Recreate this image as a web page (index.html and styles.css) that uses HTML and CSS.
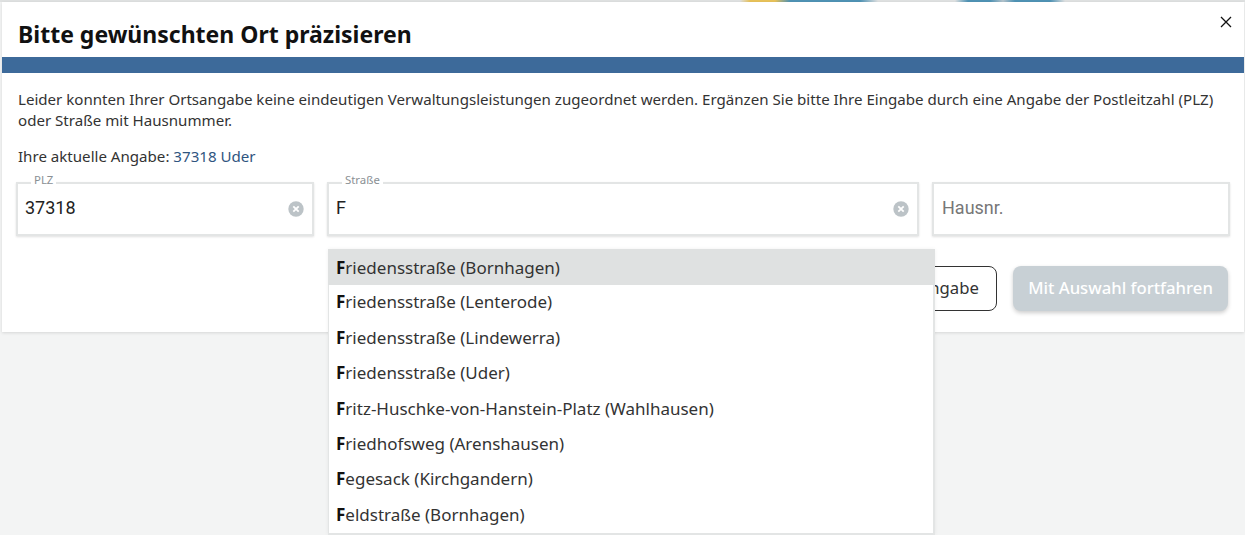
FILE: index.html
```html
<!DOCTYPE html>
<html lang="de">
<head>
<meta charset="utf-8">
<title>Bitte gewünschten Ort präzisieren</title>
<link rel="stylesheet" href="styles.css">
</head>
<body>
<div class="strip"></div>
<main class="modal">
  <button class="close" aria-label="Schließen">
    <svg width="12" height="12" viewBox="0 0 12 12"><path d="M1 1l10 10M11 1L1 11" stroke="#111" stroke-width="1.3" fill="none"/></svg>
  </button>
  <h1 class="title">Bitte gewünschten Ort präzisieren</h1>
  <div class="bar"></div>
  <div class="content">
    <p class="intro">Leider konnten Ihrer Ortsangabe keine eindeutigen Verwaltungsleistungen zugeordnet werden. Ergänzen Sie bitte Ihre Eingabe durch eine Angabe der Postleitzahl (PLZ) oder Straße mit Hausnummer.</p>
    <p class="current">Ihre aktuelle Angabe: <span class="place">37318 Uder</span></p>
    <div class="fields">
      <div class="field plz">
        <span class="legend">PLZ</span>
        <span class="value">37318</span>
        <svg class="clear" width="16" height="16" viewBox="0 0 16 16"><circle cx="8" cy="8" r="7.7" fill="#bcc3c7"/><path d="M5.3 5.3l5.4 5.4M10.7 5.3l-5.4 5.4" stroke="#fff" stroke-width="1.8" fill="none"/></svg>
      </div>
      <div class="field street">
        <span class="legend">Straße</span>
        <span class="value">F</span>
        <svg class="clear" width="16" height="16" viewBox="0 0 16 16"><circle cx="8" cy="8" r="7.7" fill="#bcc3c7"/><path d="M5.3 5.3l5.4 5.4M10.7 5.3l-5.4 5.4" stroke="#fff" stroke-width="1.8" fill="none"/></svg>
      </div>
      <div class="field number">
        <span class="value placeholder">Hausnr.</span>
      </div>
    </div>
    <div class="actions">
      <button class="btn secondary">Ohne Angabe</button>
      <button class="btn primary">Mit Auswahl fortfahren</button>
    </div>
  </div>
</main>
<ul class="list">
  <li class="item active"><b>F</b>riedensstraße (Bornhagen)</li>
  <li class="item"><b>F</b>riedensstraße (Lenterode)</li>
  <li class="item"><b>F</b>riedensstraße (Lindewerra)</li>
  <li class="item"><b>F</b>riedensstraße (Uder)</li>
  <li class="item"><b>F</b>ritz-Huschke-von-Hanstein-Platz (Wahlhausen)</li>
  <li class="item"><b>F</b>riedhofsweg (Arenshausen)</li>
  <li class="item"><b>F</b>egesack (Kirchgandern)</li>
  <li class="item"><b>F</b>eldstraße (Bornhagen)</li>
</ul>
</body>
</html>
```
FILE: styles.css
```css
* { box-sizing: border-box; }
html, body { margin: 0; height: 100%; overflow: hidden; }
body {
  background: #f3f4f4;
  font-family: "Noto Sans", sans-serif;
  color: #333;
  position: relative;
}
.strip {
  height: 2px;
  background: linear-gradient(90deg, #dfe1e1 0, #dfe1e1 740px, #e8c25a 750px, #e8c25a 775px, #4f93b5 790px, #4f93b5 860px, #dfe1e1 878px, #dfe1e1 955px, #4f93b5 968px, #4f93b5 990px, #b5c4cc 1003px, #4f93b5 1015px, #4f93b5 1050px, #dfe1e1 1065px);
}
.modal {
  position: relative;
  margin: 0 1px 0 2px;
  height: 330px;
  background: #fff;
  box-shadow: 0 1px 3px rgba(0,0,0,.12);
}
.close {
  position: absolute;
  top: 14px;
  right: 12px;
  width: 12px;
  height: 12px;
  padding: 0;
  border: 0;
  background: none;
  display: flex;
}
.title {
  margin: 0;
  padding: 14px 16px 0;
  height: 55px;
  font-size: 23px;
  line-height: 36px;
  font-weight: 700;
  color: #111;
}
.bar { height: 16px; background: #3d6a9a; }
.content { padding: 16px 14px 0 14px; }
.intro { margin: 0; font-size: 15.1px; line-height: 21px; padding-left: 2px; color: #333; }
.current { margin: 15px 0 0; font-size: 15.1px; line-height: 21px; padding-left: 2px; color: #333; }
.place { color: #2f5580; }
.fields { display: flex; gap: 13px; margin-top: 15px; }
.field {
  position: relative;
  height: 54px;
  border: 2px solid #e3e5e5;
  box-shadow: 0 1px 2px rgba(0,0,0,.12);
  background: #fff;
  display: flex;
  align-items: center;
  justify-content: space-between;
  padding: 0 8px 4px 7px;
  font-family: Roboto, sans-serif;
  font-size: 18px;
  color: #222;
}
.plz { width: 298px; }
.street { width: 592px; }
.number { width: 298px; padding-left: 8px; }
.legend {
  position: absolute;
  top: -11px;
  left: 13px;
  padding: 0 3px;
  background: linear-gradient(transparent 8px, #fff 8px);
  font-family: "Noto Sans", sans-serif;
  font-size: 11.4px;
  line-height: 14px;
  color: #8a9094;
}
.clear { margin-top: 4px; }
.placeholder { color: #777; font-size: 18px; }
.actions { display: flex; justify-content: flex-end; gap: 16px; margin-top: 30px; padding-right: 2px; }
.btn {
  height: 45px;
  border-radius: 8px;
  font-family: "Noto Sans", sans-serif;
  font-size: 16.7px;
  padding: 0 0 2px;
}
.secondary { width: 144px; background: #fff; border: 1px solid #333; color: #333; }
.primary { width: 215px; background: #c8d0d5; border: 0; color: #fff; font-weight: 500; box-shadow: 0 2px 4px rgba(0,0,0,.2); }
.list {
  position: absolute;
  left: 328px;
  top: 249px;
  width: 607px;
  height: 286px;
  margin: 0;
  padding: 0;
  list-style: none;
  background: #fff;
  box-shadow: inset -2px -2px 0 #e3e5e5, inset 1px 0 0 #e3e5e5, 0 0 4px rgba(0,0,0,.06);
}
.item {
  height: 35.4px;
  line-height: 36px;
  padding-left: 9px;
  font-size: 17px;
  color: #333;
}
.item b { color: #111; margin-left: -1px; }
.active { background: #dfe1e1; height: 36px; line-height: 38px; margin-bottom: -.6px; }
```
